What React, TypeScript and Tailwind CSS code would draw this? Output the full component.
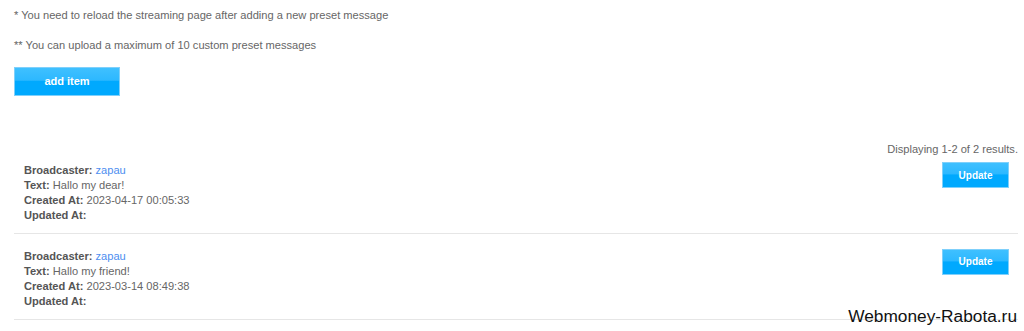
const items = [
  { broadcaster: "zapau", text: "Hallo my dear!", created: "2023-04-17 00:05:33" },
  { broadcaster: "zapau", text: "Hallo my friend!", created: "2023-03-14 08:49:38" },
];

function BlueButton({ label, className }: { label: string; className: string }) {
  return (
    <button
      className={`font-bold text-white border border-[#7fd0fb] bg-[linear-gradient(to_bottom,#3fc0ff_0%,#2db8ff_45%,#00a9fe_50%,#00a9fe_100%)] ${className}`}
    >
      {label}
    </button>
  );
}

export default function App() {
  return (
    <div className="relative w-[1024px] h-[331px] overflow-hidden bg-white pl-[14px] pr-[6px] font-['Liberation_Sans',Arial,sans-serif] text-[11.1px] text-[#666]">
      {/* Notes */}
      <p className="leading-[15px] pt-[7.5px]">* You need to reload the streaming page after adding a new preset message</p>
      <p className="leading-[15px] mt-[15px]">** You can upload a maximum of 10 custom preset messages</p>

      <BlueButton label="add item" className="mt-[14.5px] w-[106px] h-[29px] text-[11px]" />

      {/* Results */}
      <div className="mt-[46px] text-right leading-[15px]">Displaying 1-2 of 2 results.</div>

      <div className="mt-[5px]">
        {items.map((item, i) => (
          <div
            key={i}
            className={`flex justify-between border-b border-[#e6e6e6] pl-[10px] pr-[9px] pb-[10px] ${i === 0 ? "pt-0" : "pt-[15px]"}`}
          >
            <div className="leading-[15px] pt-[0.5px]">
              <div>
                <span className="font-bold text-[#555]">Broadcaster:</span>{" "}
                <a className="text-[#4d8ef0]">{item.broadcaster}</a>
              </div>
              <div>
                <span className="font-bold text-[#555]">Text:</span> {item.text}
              </div>
              <div>
                <span className="font-bold text-[#555]">Created At:</span> {item.created}
              </div>
              <div>
                <span className="font-bold text-[#555]">Updated At:</span>
              </div>
            </div>
            <BlueButton label="Update" className="w-[67px] h-[26px] text-[10px]" />
          </div>
        ))}
      </div>

      {/* watermark */}
      <div className="absolute right-[7px] bottom-[5px] text-[17.3px] leading-[20px] text-[#111]">
        Webmoney-Rabota.ru
      </div>
    </div>
  );
}
